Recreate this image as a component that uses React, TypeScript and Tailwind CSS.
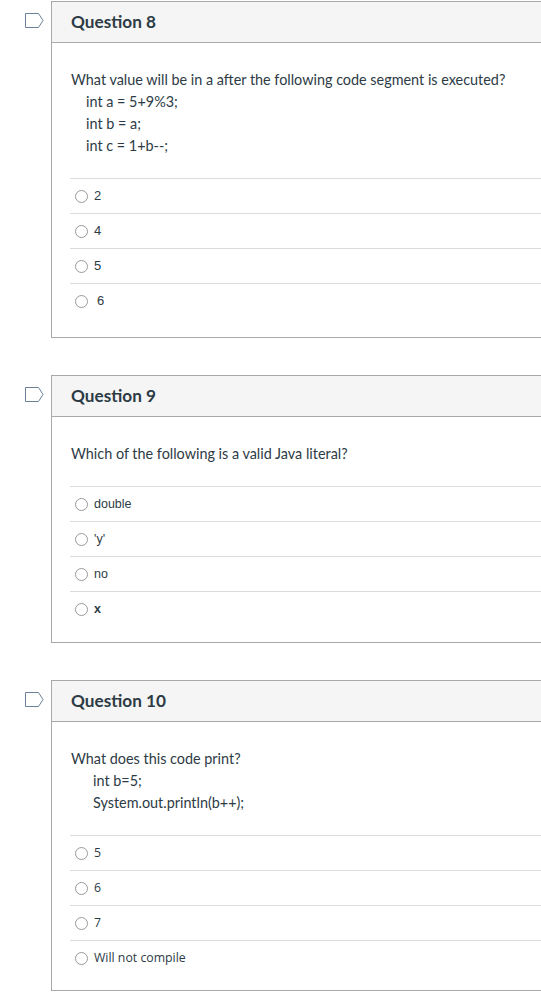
import React from 'react';

type Answer = { label: string; className?: string };

interface QuestionProps {
  number: number;
  prompt: string;
  code: string[];
  codeIndent: string;
  answers: Answer[];
  answerFont: string;
  bottomPad?: string;
}

const Flag = () => (
  <svg width="19" height="15" viewBox="0 0 19 15" className="block">
    <path d="M0.5 0.5 H13.5 L18 7.5 L13.5 14.5 H0.5 Z" fill="none" stroke="#6a8199" strokeWidth="1" />
  </svg>
);

const Radio = () => (
  <span className="inline-block w-[13px] h-[13px] rounded-full border border-[#9a9a9a] bg-white shrink-0" />
);

const Question: React.FC<QuestionProps> = ({
  number,
  prompt,
  code,
  codeIndent,
  answers,
  answerFont,
  bottomPad = 'pb-[18px]',
}) => {
  return (
    <div className="flex">
      {/* flag column */}
      <div className="w-[51px] shrink-0 pl-[25px] pt-[12px]">
        <Flag />
      </div>

      <div className="flex-1 border-t border-l border-b border-[#a9a9a9]">
        <div className="h-[41px] bg-[#f5f5f5] border-b border-[#a9a9a9] pl-[19px] flex items-center">
          <h2 className="text-[17.2px] font-bold text-[#2d3b45] leading-none">Question {number}</h2>
        </div>

        <div className={`pl-[18px] pt-[26px] ${bottomPad}`}>
          <div className="text-[14.4px] leading-[22px] text-[#2d3b45] pl-px">
            <p>{prompt}</p>
            {code.map((line) => (
              <p key={line} className={codeIndent}>
                {line}
              </p>
            ))}
          </div>

          <div className="mt-[21px]">
            {answers.map((a, i) => (
              <div key={i} className="h-[35px] border-t border-[#dcdcdc] flex items-center pl-[5px]">
                <Radio />
                <span className={`ml-[6px] text-[#2d3b45] ${answerFont} ${a.className ?? ''}`}>
                  {a.label}
                </span>
              </div>
            ))}
          </div>
        </div>
      </div>
    </div>
  );
};

export default function App() {
  return (
    <div className="bg-white w-[541px] min-h-[997px] overflow-hidden pt-px font-['Lato','Open_Sans',sans-serif]">
      <div className="flex flex-col gap-[37px]">
        <Question
          number={8}
          prompt="What value will be in a after the following code segment is executed?"
          code={['int a = 5+9%3;', 'int b = a;', 'int c = 1+b--;']}
          codeIndent="pl-[15px]"
          answerFont="text-[13px] font-['Liberation_Sans',Arial,sans-serif]"
          bottomPad="pb-[19px]"
          answers={[{ label: '2' }, { label: '4' }, { label: '5' }, { label: '6', className: 'pl-[3px]' }]}
        />
        <Question
          number={9}
          prompt="Which of the following is a valid Java literal?"
          code={[]}
          codeIndent=""
          answerFont="text-[12.5px] font-['Liberation_Sans',Arial,sans-serif]"
          bottomPad="pb-[16px]"
          answers={[
            { label: 'double' },
            { label: "'y'" },
            { label: 'no' },
            { label: 'x', className: "font-['Liberation_Mono',monospace] font-bold" },
          ]}
        />
        <Question
          number={10}
          prompt="What does this code print?"
          code={['int b=5;', 'System.out.println(b++);']}
          codeIndent="pl-[22px]"
          answerFont="text-[12.3px] font-['Open_Sans',sans-serif]"
          bottomPad="pb-[15px]"
          answers={[{ label: '5' }, { label: '6' }, { label: '7' }, { label: 'Will not compile' }]}
        />
      </div>
    </div>
  );
}
